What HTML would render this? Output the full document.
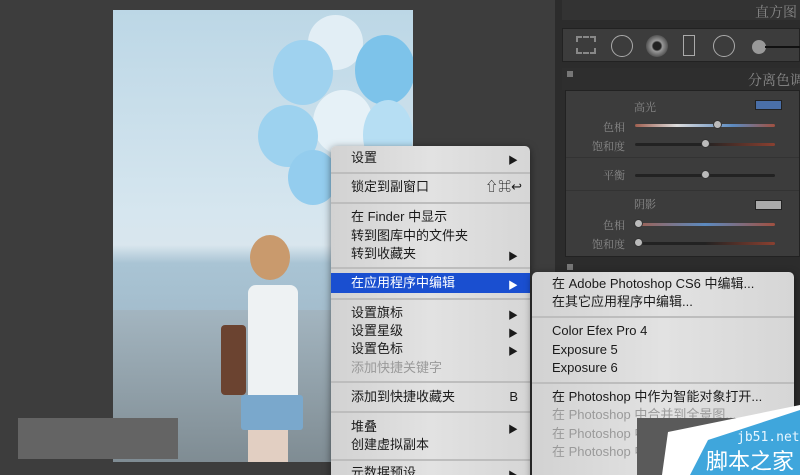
<!DOCTYPE html>
<html><head><meta charset="utf-8"><style>
*{margin:0;padding:0;box-sizing:border-box}
html,body{width:800px;height:475px;overflow:hidden}
body{background:#3d3d3d;position:relative;font-family:"Liberation Sans","Noto Sans CJK SC",sans-serif}
.abs{position:absolute}
.menu{position:absolute;background:linear-gradient(90deg,#d2d2d2,#e2e2e2 50%,#d6d6d6);border-radius:5px;box-shadow:0 2px 8px rgba(0,0,0,.5);font-size:13px;color:#1a1a1a;overflow:hidden}
.it{position:absolute;left:20px;height:18px;line-height:18px;white-space:nowrap}
.ar{position:absolute;right:12px;font-size:10px}
.sep{position:absolute;left:0;right:0;height:2px;background:#bdbdbd}
.dis{color:#9a9a9a}
.lbl{position:absolute;color:#8a8a8a;font-size:11px;font-family:"Noto Serif CJK SC",serif}
.tr{position:absolute;height:3px;border-radius:2px}
.th{position:absolute;width:9px;height:9px;background:#bbb;border-radius:50%;border:1px solid #333}
</style></head><body>
<div class="abs" style="left:113px;top:10px;width:300px;height:452px;background:linear-gradient(180deg,#bcd7e6 0%,#d6e6ef 45%,#d9e6ee 52%,#a9c4d4 56%,#a3bccc 68%,#b9c9d2 72%,#9eaab2 85%,#8c979e 100%);overflow:hidden">
 <div class="abs" style="left:195px;top:5px;width:55px;height:55px;border-radius:50%;background:#e2eef5"></div>
 <div class="abs" style="left:160px;top:30px;width:60px;height:65px;border-radius:50%;background:#9fd2ef"></div>
 <div class="abs" style="left:242px;top:25px;width:60px;height:70px;border-radius:50%;background:#7dc3ea"></div>
 <div class="abs" style="left:200px;top:80px;width:60px;height:65px;border-radius:50%;background:#e6f1f7"></div>
 <div class="abs" style="left:145px;top:95px;width:60px;height:62px;border-radius:50%;background:#9dd2ef"></div>
 <div class="abs" style="left:250px;top:90px;width:50px;height:70px;border-radius:50%;background:#b6def3"></div>
 <div class="abs" style="left:175px;top:140px;width:50px;height:55px;border-radius:50%;background:#94cdee"></div>
 <div class="abs" style="left:0;top:300px;width:300px;height:152px;background:linear-gradient(180deg,#a3b5c0,#7f8c93)"></div>
 <div class="abs" style="left:137px;top:225px;width:40px;height:45px;border-radius:50%;background:#c99a6d"></div>
 <div class="abs" style="left:135px;top:275px;width:50px;height:120px;background:#eef2f3;border-radius:8px"></div>
 <div class="abs" style="left:108px;top:315px;width:25px;height:70px;background:#6b4330;border-radius:4px"></div>
 <div class="abs" style="left:128px;top:385px;width:62px;height:35px;background:#7aa8cc;border-radius:3px"></div>
 <div class="abs" style="left:135px;top:420px;width:40px;height:32px;background:#e2cfc2"></div>
</div>
<div class="abs" style="left:18px;top:418px;width:160px;height:41px;background:#646464"></div>
<div class="abs" style="left:555px;top:0;width:245px;height:475px;background:#2c2c2c"></div>
<div class="abs" style="left:562px;top:0;width:238px;height:20px;background:#333"></div>
<div class="abs" style="left:755px;top:2px;font-size:14px;color:#888;font-family:'Noto Serif CJK SC',serif;white-space:nowrap">直方图</div>
<div class="abs" style="left:562px;top:28px;width:238px;height:34px;background:#3c3c3c;border:1px solid #222"></div>
<div class="abs" style="left:576px;top:36px;width:20px;height:18px;border:2px dashed #888"></div>
<div class="abs" style="left:611px;top:35px;width:22px;height:22px;border:1px solid #aaa;border-radius:50%"></div>
<div class="abs" style="left:646px;top:35px;width:22px;height:22px;background:radial-gradient(#222 25%,#999 35%,#555 70%);border-radius:50%"></div>
<div class="abs" style="left:683px;top:35px;width:12px;height:21px;border:1px solid #aaa"></div>
<div class="abs" style="left:713px;top:35px;width:22px;height:22px;border:1px solid #aaa;border-radius:50%"></div>
<div class="abs" style="left:752px;top:40px;width:14px;height:14px;background:#999;border-radius:50%"></div>
<div class="abs" style="left:765px;top:46px;width:35px;height:2px;background:#111"></div>
<div class="abs" style="left:562px;top:68px;width:238px;height:22px;background:#2e2e2e"></div>
<div class="abs" style="left:567px;top:71px;width:6px;height:6px;background:#777"></div>
<div class="abs" style="left:748px;top:70px;font-size:14px;color:#8a8a8a;font-family:'Noto Serif CJK SC',serif;white-space:nowrap">分离色调</div>
<div class="abs" style="left:565px;top:90px;width:235px;height:167px;background:#3c3c3c;border:1px solid #222"></div>
<div class="lbl" style="left:634px;top:99px">高光</div>
<div class="abs" style="left:755px;top:100px;width:27px;height:10px;background:#4a6fa8;border:1px solid #222"></div>
<div class="lbl" style="left:603px;top:119px">色相</div>
<div class="lbl" style="left:592px;top:138px">饱和度</div>
<div class="tr" style="left:635px;top:124px;width:140px;background:linear-gradient(90deg,#a06050,#ddd 30%,#5b8ac0 70%,#a05040)"></div>
<div class="th" style="left:713px;top:120px"></div>
<div class="tr" style="left:635px;top:143px;width:140px;background:linear-gradient(90deg,#222 50%,#8a4030)"></div>
<div class="th" style="left:701px;top:139px"></div>
<div class="abs" style="left:566px;top:157px;width:233px;height:1px;background:#333"></div>
<div class="lbl" style="left:603px;top:167px">平衡</div>
<div class="tr" style="left:635px;top:174px;width:140px;background:#222"></div>
<div class="th" style="left:701px;top:170px"></div>
<div class="abs" style="left:566px;top:190px;width:233px;height:1px;background:#333"></div>
<div class="lbl" style="left:634px;top:196px">阴影</div>
<div class="abs" style="left:755px;top:200px;width:27px;height:10px;background:#aaa;border:1px solid #222"></div>
<div class="lbl" style="left:603px;top:217px">色相</div>
<div class="lbl" style="left:592px;top:236px">饱和度</div>
<div class="tr" style="left:635px;top:223px;width:140px;background:linear-gradient(90deg,#a06050,#5b8ac0 50%,#a05040)"></div>
<div class="th" style="left:634px;top:219px"></div>
<div class="tr" style="left:635px;top:242px;width:140px;background:linear-gradient(90deg,#222 50%,#8a4030)"></div>
<div class="th" style="left:634px;top:238px"></div>
<div class="abs" style="left:567px;top:264px;width:6px;height:6px;background:#777"></div>
<div class="menu" style="left:331px;top:146px;width:199px;height:340px">
 <div class="it" style="top:3px">设置</div><div class="ar" style="top:6px">▶</div>
 <div class="sep" style="top:26px"></div>
 <div class="it" style="top:32px">锁定到副窗口</div><div class="abs" style="right:8px;top:32px;font-size:13px;line-height:18px">⇧⌘↩</div>
 <div class="sep" style="top:56px"></div>
 <div class="it" style="top:62px">在 Finder 中显示</div>
 <div class="it" style="top:81px">转到图库中的文件夹</div>
 <div class="it" style="top:99px">转到收藏夹</div><div class="ar" style="top:102px">▶</div>
 <div class="sep" style="top:121px"></div>
 <div class="abs" style="left:0;right:0;top:127px;height:20px;background:#1a4fd0"></div>
 <div class="it" style="top:128px;color:#fff">在应用程序中编辑</div><div class="ar" style="top:131px;color:#fff">▶</div>
 <div class="sep" style="top:152px"></div>
 <div class="it" style="top:158px">设置旗标</div><div class="ar" style="top:161px">▶</div>
 <div class="it" style="top:176px">设置星级</div><div class="ar" style="top:179px">▶</div>
 <div class="it" style="top:194px">设置色标</div><div class="ar" style="top:197px">▶</div>
 <div class="it dis" style="top:213px">添加快捷关键字</div>
 <div class="sep" style="top:235px"></div>
 <div class="it" style="top:242px">添加到快捷收藏夹</div><div class="abs" style="right:12px;top:242px;line-height:18px">B</div>
 <div class="sep" style="top:265px"></div>
 <div class="it" style="top:272px">堆叠</div><div class="ar" style="top:275px">▶</div>
 <div class="it" style="top:290px">创建虚拟副本</div>
 <div class="sep" style="top:313px"></div>
 <div class="it" style="top:318px">元数据预设</div><div class="ar" style="top:321px">▶</div>
</div>
<div class="menu" style="left:532px;top:272px;width:262px;height:220px">
 <div class="it" style="top:3px">在 Adobe Photoshop CS6 中编辑...</div>
 <div class="it" style="top:21px">在其它应用程序中编辑...</div>
 <div class="sep" style="top:44px"></div>
 <div class="it" style="top:50px">Color Efex Pro 4</div>
 <div class="it" style="top:69px">Exposure 5</div>
 <div class="it" style="top:87px">Exposure 6</div>
 <div class="sep" style="top:110px"></div>
 <div class="it" style="top:116px">在 Photoshop 中作为智能对象打开...</div>
 <div class="it dis" style="top:134px">在 Photoshop 中合并到全景图...</div>
 <div class="it dis" style="top:153px">在 Photoshop 中合并到 HDR Pro...</div>
 <div class="it dis" style="top:171px">在 Photoshop 中作为图层打开...</div>
</div>
<div class="abs" style="left:637px;top:418px;width:163px;height:57px;background:#5a5a5a"></div>
<svg class="abs" style="left:0;top:0" width="800" height="475"><polygon points="662,475 668,432 800,405 800,475" fill="#fff"/><polygon points="690,475 708,440 800,410 800,475" fill="#3fa6dc"/></svg>
<div class="abs" style="left:737px;top:430px;color:#e8f6ff;font-size:13px;font-family:'DejaVu Sans Mono',monospace;white-space:nowrap">jb51.net</div>
<div class="abs" style="left:706px;top:446px;color:#fff;font-size:22px;line-height:28px;font-family:'Noto Sans CJK SC',sans-serif;white-space:nowrap">脚本之家</div>
</body></html>
